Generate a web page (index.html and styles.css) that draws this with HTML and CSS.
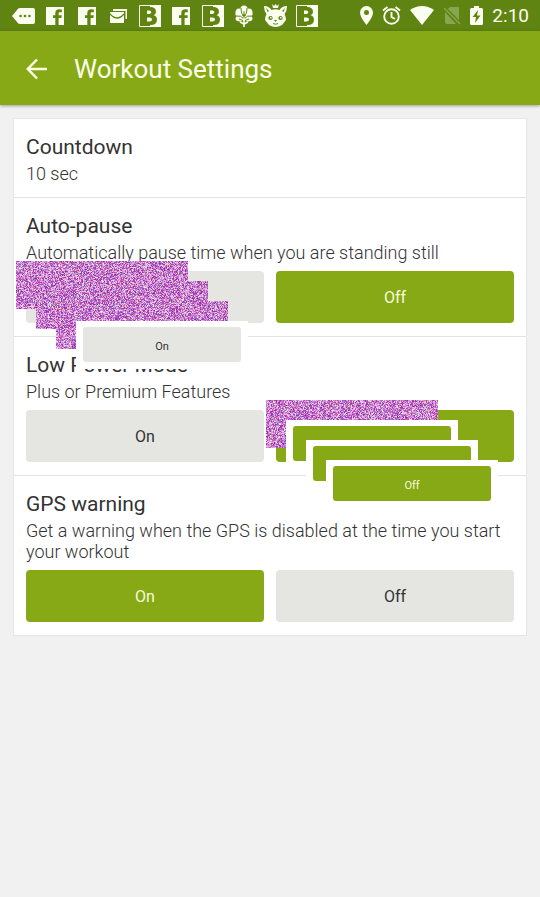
FILE: index.html
```html
<!DOCTYPE html>
<html lang="en">
<head>
<meta charset="utf-8">
<meta name="viewport" content="width=device-width, initial-scale=1">
<title>Workout Settings</title>
<link rel="stylesheet" href="styles.css">
</head>
<body>
<svg class="symbols" aria-hidden="true">
  <symbol id="facebook" viewBox="0 0 18 18"><path fill="currentColor" fill-rule="evenodd" d="M0 0H18V18H12.600V11H15.400L15.800 8.200H12.600V6.600Q12.600 5.200 14 5.200H15.800V2.600Q9.300 1.400 9.300 6V8.200H7V11H9.300V18H0Z"/></symbol>
  <symbol id="bold" viewBox="0 0 22 22"><path fill="currentColor" d="M11 0H22V22H11Z"/><path fill="none" stroke="currentColor" d="M.5.5H21.500V21.500H.5Z"/><path fill="#5f8412" d="M3 2H11Q17 2 17 7Q17 9.500 14.500 10.300Q18 11.200 18 14.800Q18 20 11.500 20H3Z"/><path fill="currentColor" d="M8 5.500H10.300Q12.300 5.500 12.300 7.300Q12.300 9 10.300 9H8ZM8 12.500H10.500Q13 12.500 13 14.500Q13 16.500 10.500 16.500H8Z"/></symbol>
</svg>
<div class="statusbar">
  <div class="notifications">
    <svg width="23" height="18" viewBox="0 0 23 18"><path fill="currentColor" d="M8 1H21Q23 1 23 3V15Q23 17 21 17H8Q6 17 5 15L0 9L5 3Q6 1 8 1Z"/><g fill="#5f8412"><circle cx="8.500" cy="9" r="1.300"/><circle cx="13" cy="9" r="1.300"/><circle cx="17.500" cy="9" r="1.300"/></g></svg>
    <svg width="18" height="18"><use href="#facebook"/></svg>
    <svg width="18" height="18"><use href="#facebook"/></svg>
    <svg width="17" height="14" viewBox="0 0 17 14"><path fill="currentColor" d="M3 0H17V10H15.500V2H3ZM0 3H14V14H0Z"/><path fill="none" stroke="#5f8412" stroke-width="1.300" d="M0 5Q7 13 14 5"/></svg>
    <svg width="22" height="22"><use href="#bold"/></svg>
    <svg width="18" height="18"><use href="#facebook"/></svg>
    <svg width="22" height="22"><use href="#bold"/></svg>
    <svg width="18" height="22" viewBox="0 0 18 22"><g fill="currentColor"><ellipse cx="9" cy="5" rx="4" ry="4.600"/><ellipse cx="4" cy="8" rx="3.600" ry="4.500"/><ellipse cx="14" cy="8" rx="3.600" ry="4.500"/><ellipse cx="5" cy="13.500" rx="4.500" ry="3"/><ellipse cx="13" cy="13.500" rx="4.500" ry="3"/></g><path fill="none" stroke="#5f8412" d="M9 13V6M6 3L6.500 8L9 11L11.500 8L12 3M1 11Q6 10 9 14Q12 10 17 11M4 14L8 15.500M14 14L10 15.500"/><path fill="none" stroke="currentColor" stroke-width="1.600" d="M9 13V22M5 17L9 19L13 17"/></svg>
    <svg width="23" height="24" viewBox="0 0 23 24"><path fill="currentColor" d="M0 2Q5 2 7.500 6Q11.500 4.500 15.500 6Q18 2 23 2Q23 7 20.500 10Q22 13 22 16L18 21Q11.500 25 5 21L1 16Q1 13 2.500 10Q0 7 0 2ZM8 0L10 2L11.500 0L13 2L15 0L14 4H9Z"/><g fill="#5f8412"><path d="M2 4L5 7L3.500 8ZM21 4L18 7L19.500 8Z"/><ellipse cx="6.500" cy="14" rx="2.200" ry="2"/><ellipse cx="16.500" cy="14" rx="2.200" ry="2"/><path d="M10 16H13L11.500 18Z"/></g><path fill="none" stroke="#5f8412" d="M9 19.500Q11.500 21 14 19.500"/><path fill="currentColor" d="M6 13H7.500V14.500H6ZM16 13H17.500V14.500H16Z"/></svg>
    <svg width="22" height="22"><use href="#bold"/></svg>
  </div>
  <div class="system">
    <svg width="13" height="19" viewBox="0 0 13 19"><path fill="currentColor" fill-rule="evenodd" d="M6.500 0A6.500 6.500 0 0 1 13 6.500Q13 11 6.500 19Q0 11 0 6.500A6.500 6.500 0 0 1 6.500 0ZM6.500 4A2.500 2.500 0 1 0 6.500 9A2.500 2.500 0 1 0 6.500 4Z"/></svg>
    <svg width="19" height="19" viewBox="0 0 19 19"><g fill="none" stroke="currentColor" stroke-width="1.900"><circle cx="9.500" cy="10.500" r="7.300"/><path d="M1 4.500L5.500 1M18 4.500L13.500 1M9.500 6V11L13 13"/></g></svg>
    <svg width="24" height="19" viewBox="0 0 24 19"><path fill="currentColor" d="M12 19L0 4Q12-4 24 4Z"/></svg>
    <svg width="18" height="19" viewBox="0 0 18 19"><path fill="#88a551" d="M7 1H16V14L5 3ZM2 6L13 18H4Q2 18 2 16Z"/><path fill="none" stroke="#88a551" stroke-width="1.500" d="M1 2L17 18"/></svg>
    <svg width="13" height="19" viewBox="0 0 13 19"><path fill="currentColor" d="M4 0H9V2H11.500Q13 2 13 3.500V17.500Q13 19 11.500 19H1.500Q0 19 0 17.500V3.500Q0 2 1.500 2H4Z"/><path fill="#5f8412" d="M8 4L2.500 11H6L5 17L10.500 9.500H7Z"/></svg>
    <span class="time">2:10</span>
  </div>
</div>
<header class="appbar">
  <button class="back" type="button" aria-label="Back"><svg width="22" height="22" viewBox="0 0 22 22"><path fill="none" stroke="currentColor" stroke-width="2.500" d="M21 11H2M11 1.500L1.800 11L11 20.500"/></svg></button>
  <h1>Workout Settings</h1>
</header>
<main class="card">
  <section class="setting">
    <h2>Countdown</h2>
    <p>10 sec</p>
  </section>
  <section class="setting">
    <h2>Auto-pause</h2>
    <p>Automatically pause time when you are standing still</p>
    <div class="choices">
      <div class="choice">
        <button class="option" type="button">On</button>
        <div class="trail">
          <canvas class="tile step0" width="172" height="48"></canvas>
          <canvas class="tile step1" width="172" height="48"></canvas>
          <canvas class="tile step2" width="172" height="48"></canvas>
          <div class="tile step3"><button class="option small" type="button">On</button></div>
        </div>
      </div>
      <div class="choice"><button class="option selected" type="button">Off</button></div>
    </div>
  </section>
  <section class="setting">
    <h2>Low Power Mode</h2>
    <p>Plus or Premium Features</p>
    <div class="choices">
      <div class="choice"><button class="option" type="button">On</button></div>
      <div class="choice">
        <button class="option selected" type="button">Off</button>
        <div class="trail">
          <canvas class="tile step0" width="172" height="48"></canvas>
          <div class="tile step1"><button class="option selected small" type="button">Off</button></div>
          <div class="tile step2"><button class="option selected small" type="button">Off</button></div>
          <div class="tile step3"><button class="option selected small" type="button">Off</button></div>
        </div>
      </div>
    </div>
  </section>
  <section class="setting">
    <h2>GPS warning</h2>
    <p>Get a warning when the GPS is disabled at the time you start your workout</p>
    <div class="choices">
      <div class="choice"><button class="option selected" type="button">On</button></div>
      <div class="choice"><button class="option" type="button">Off</button></div>
    </div>
  </section>
</main>
<script src="noise.js"></script>
</body>
</html>
```
FILE: styles.css
```css
* { box-sizing: border-box; }

body {
  margin: 0;
  min-height: 100vh;
  background: #f1f1f1;
  color: #333;
  font-family: Roboto, "Liberation Sans", sans-serif;
}

h1, h2, p { margin: 0; font-weight: 400; }
svg { display: block; flex: none; }
button { border: 0; padding: 0; font: inherit; }

.symbols { position: absolute; width: 0; height: 0; }

.statusbar {
  display: flex;
  align-items: center;
  justify-content: space-between;
  height: 31px;
  padding: 0 11px 0 8px;
  background: #5f8412;
  color: #fbfff0;
}

.notifications {
  display: grid;
  grid-template-columns: repeat(10, 1fr);
  align-items: center;
  justify-items: center;
  flex: 0 1 315px;
}

.system { display: flex; align-items: center; gap: 9px; }
.time { font-size: 19px; line-height: 31px; }

.appbar {
  display: flex;
  align-items: center;
  gap: 26px;
  height: 74px;
  padding: 2px 26px 0;
  background: #88a916;
  color: #fbffe8;
  box-shadow: 0 1px 3px rgba(0, 0, 0, .35);
}

.appbar h1 { font-size: 26px; line-height: 32px; }
.back { background: none; color: inherit; }

.card {
  margin: 14px 14px 0;
  background: #fff;
  box-shadow: 0 0 0 1px #e6e6e6;
}

.setting { padding: 14px 12px 13px; }
.setting + .setting { border-top: 1px solid #e3e3e3; }
.setting h2 { font-size: 21px; line-height: 28px; }
.setting p {
  padding-top: 2px;
  color: #333;
  font-size: 18px;
  font-weight: 300;
  line-height: 21px;
}

.choices { display: flex; gap: 12px; padding-top: 8px; }
.choice { position: relative; flex: 1; }

.option {
  display: block;
  width: 100%;
  height: 52px;
  border-radius: 4px;
  background: #e5e6e1;
  color: #333;
  font-size: 16px;
}

.option.selected { background: #88a916; color: #f7fbdc; }
.option.small { height: 35px; padding-top: 4px; border-radius: 3px; font-size: 11px; }

.trail { position: absolute; z-index: 1; top: -10px; left: -10px; }
.tile { position: absolute; display: block; width: 172px; height: 48px; }
div.tile { padding: 6px 7px; background: #fff; }
.step1 { top: 20px; left: 20px; }
.step2 { top: 40px; left: 40px; }
.step3 { top: 60px; left: 60px; }
```
FILE: noise.js
```js
// Fills each canvas tile with pink and violet grain.
let seed = 7;
function random() {
  seed = (seed * 1664525 + 1013904223) % 4294967296;
  return seed / 4294967296;
}

document.querySelectorAll("canvas").forEach((canvas) => {
  const context = canvas.getContext("2d");
  const grain = context.createImageData(canvas.width, canvas.height);
  for (let i = 0; i < grain.data.length; i += 4) {
    const light = random();
    const red = 90 + 165 * (0.5 * light + 0.5 * random());
    const blue = 120 + 135 * (0.5 * light + 0.5 * random());
    grain.data[i] = red + 25;
    grain.data[i + 1] = 40 + 215 * light * (0.65 + 0.35 * random());
    grain.data[i + 2] = blue + 15;
    grain.data[i + 3] = 255;
  }
  context.putImageData(grain, 0, 0);
});
```
